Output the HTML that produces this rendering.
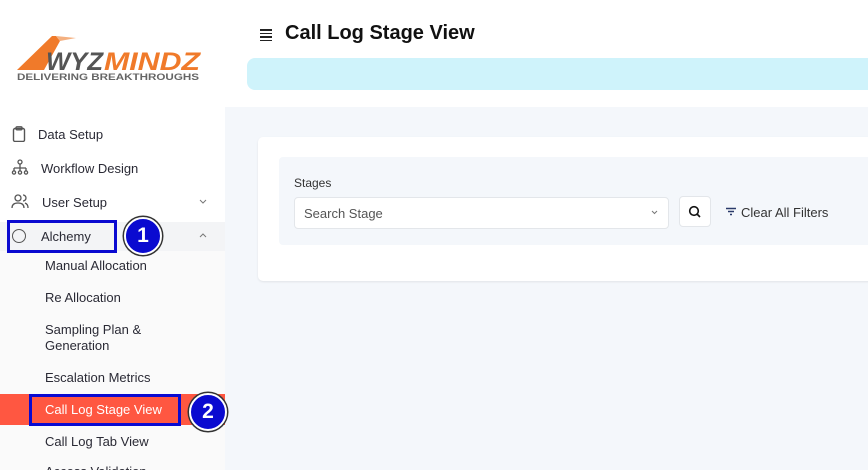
<!DOCTYPE html>
<html><head><meta charset="utf-8"><style>
*{margin:0;padding:0;box-sizing:border-box}
html,body{width:868px;height:470px;overflow:hidden}
body{font-family:"Liberation Sans",Arial,sans-serif;background:#f4f7fb;position:relative;color:#222}
.a{position:absolute}
.side{left:0;top:0;width:225px;height:470px;background:#fff}
.sub{left:0;top:222px;width:225px;height:248px;background:#fafafa}
.it{font-size:13px;color:#2a2a35}
.badge{width:38px;height:38px;border-radius:50%;background:#0a0ad0;border:2px solid #fff;box-shadow:0 0 0 1.5px #333;color:#fff;font-weight:bold;font-size:21px;text-align:center;line-height:34px}
</style></head><body>
<div class="a side"></div>
<div class="a sub"></div>
<div class="a" style="left:0;top:222px;width:225px;height:29px;background:#f3f4f6"></div>
<!-- logo -->
<svg class="a" style="left:16px;top:34px" width="186" height="48" viewBox="0 0 186 48">
<polygon points="1,36 36,2 40,2 44,7 28,36" fill="#f07a2a"/>
<polygon points="40,2 60,4 44,7" fill="#f4b080"/>
<text x="30" y="36" font-family="Liberation Sans" font-weight="bold" font-style="italic" font-size="25" fill="#555" textLength="57" lengthAdjust="spacingAndGlyphs">WYZ</text>
<text x="88" y="36" font-family="Liberation Sans" font-weight="bold" font-style="italic" font-size="25" fill="#f07a2a" textLength="96" lengthAdjust="spacingAndGlyphs">MINDZ</text>
<text x="1" y="46" font-family="Liberation Sans" font-weight="bold" font-size="9" fill="#666" textLength="182" lengthAdjust="spacingAndGlyphs">DELIVERING  BREAKTHROUGHS</text>
</svg>
<!-- menu -->
<svg class="a" style="left:12px;top:126px" width="14" height="16" fill="none" stroke="#555" stroke-width="1.4"><rect x="1.5" y="2.5" width="11" height="13" rx="1.5"/><rect x="4" y="0.8" width="6" height="3" rx="1"/></svg>
<div class="a it" style="left:38px;top:127px">Data Setup</div>
<svg class="a" style="left:11px;top:159px" width="18" height="16" fill="none" stroke="#555" stroke-width="1.3"><circle cx="9" cy="3" r="2"/><path d="M9 5v4M3 9h12M3 9v3M9 9v3M15 9v3"/><circle cx="3" cy="13.5" r="1.6"/><circle cx="9" cy="13.5" r="1.6"/><circle cx="15" cy="13.5" r="1.6"/></svg>
<div class="a it" style="left:41px;top:161px">Workflow Design</div>
<svg class="a" style="left:11px;top:193px" width="18" height="16" fill="none" stroke="#555" stroke-width="1.3"><circle cx="7" cy="5" r="3"/><path d="M1 15c0-4 3-5 6-5s6 1 6 5M12 2a3 3 0 0 1 0 6M14 10c2 1 3 2 3 5"/></svg>
<div class="a it" style="left:42px;top:195px">User Setup</div>
<svg class="a" style="left:199px;top:199px" width="8" height="5" fill="none" stroke="#777" stroke-width="1"><path d="M1 1l3 3 3-3"/></svg>
<div class="a" style="left:12px;top:229px;width:14px;height:14px;border:1.5px solid #555;border-radius:50%"></div>
<div class="a it" style="left:41px;top:229px">Alchemy</div>
<svg class="a" style="left:199px;top:233px" width="8" height="5" fill="none" stroke="#777" stroke-width="1"><path d="M1 4l3-3 3 3"/></svg>
<div class="a" style="left:7px;top:220px;width:110px;height:33px;border:3px solid #0a0ad0"></div>
<div class="a badge" style="left:124px;top:217px">1</div>
<div class="a it" style="left:45px;top:258px">Manual Allocation</div>
<div class="a it" style="left:45px;top:290px">Re Allocation</div>
<div class="a it" style="left:45px;top:322px;line-height:16px">Sampling Plan &amp;<br>Generation</div>
<div class="a it" style="left:45px;top:370px">Escalation Metrics</div>
<div class="a" style="left:0;top:394px;width:225px;height:31px;background:#ff5741"></div>
<div class="a" style="left:29px;top:394px;width:152px;height:32px;border:3px solid #0a0ad0"></div>
<div class="a it" style="left:45px;top:402px;color:#fff">Call Log Stage View</div>
<div class="a badge" style="left:189px;top:393px">2</div>
<div class="a it" style="left:45px;top:434px">Call Log Tab View</div>
<div class="a it" style="left:45px;top:464px">Access Validation</div>
<!-- header -->
<div class="a" style="left:225px;top:0;width:643px;height:107px;background:#fff"></div>
<div class="a" style="left:260px;top:29px;width:12px;font-size:0">
<div style="height:1.5px;background:#222;margin-bottom:2px"></div><div style="height:1.5px;background:#222;margin-bottom:2px"></div><div style="height:1.5px;background:#222;margin-bottom:2px"></div><div style="height:1.5px;background:#222"></div></div>
<div class="a" style="left:285px;top:22px;font-size:20px;font-weight:bold;color:#111">Call Log Stage View</div>
<div class="a" style="left:247px;top:58px;width:640px;height:32px;background:#cff3fb;border-radius:8px"></div>
<!-- card -->
<div class="a" style="left:258px;top:137px;width:620px;height:144px;background:#fff;border-radius:5px;box-shadow:0 1px 2px rgba(0,0,0,.08)"></div>
<div class="a" style="left:279px;top:157px;width:600px;height:88px;background:#f4f7fb;border-radius:4px"></div>
<div class="a" style="left:294px;top:176px;font-size:12px;color:#333">Stages</div>
<div class="a" style="left:294px;top:197px;width:375px;height:32px;background:#fff;border:1px solid #e3e6ea;border-radius:4px"></div>
<div class="a" style="left:304px;top:206px;font-size:13px;color:#555">Search Stage</div>
<svg class="a" style="left:651px;top:210px" width="7" height="5" fill="none" stroke="#777" stroke-width="1"><path d="M1 1l2.5 2.5 2.5-2.5"/></svg>
<div class="a" style="left:679px;top:196px;width:32px;height:31px;background:#fff;border:1px solid #e3e6ea;border-radius:4px"></div>
<svg class="a" style="left:688px;top:205px" width="14" height="14" fill="none" stroke="#111" stroke-width="1.6"><circle cx="6" cy="6" r="4.3"/><path d="M9 9l3 3"/></svg>
<svg class="a" style="left:725px;top:207px" width="12" height="10" stroke="#2a3a6a" stroke-width="1.4"><path d="M1 1.5h10M3 4.5h6M5 7.5h2"/></svg>
<div class="a" style="left:741px;top:205px;font-size:13px;color:#333">Clear All Filters</div>
</body></html>
